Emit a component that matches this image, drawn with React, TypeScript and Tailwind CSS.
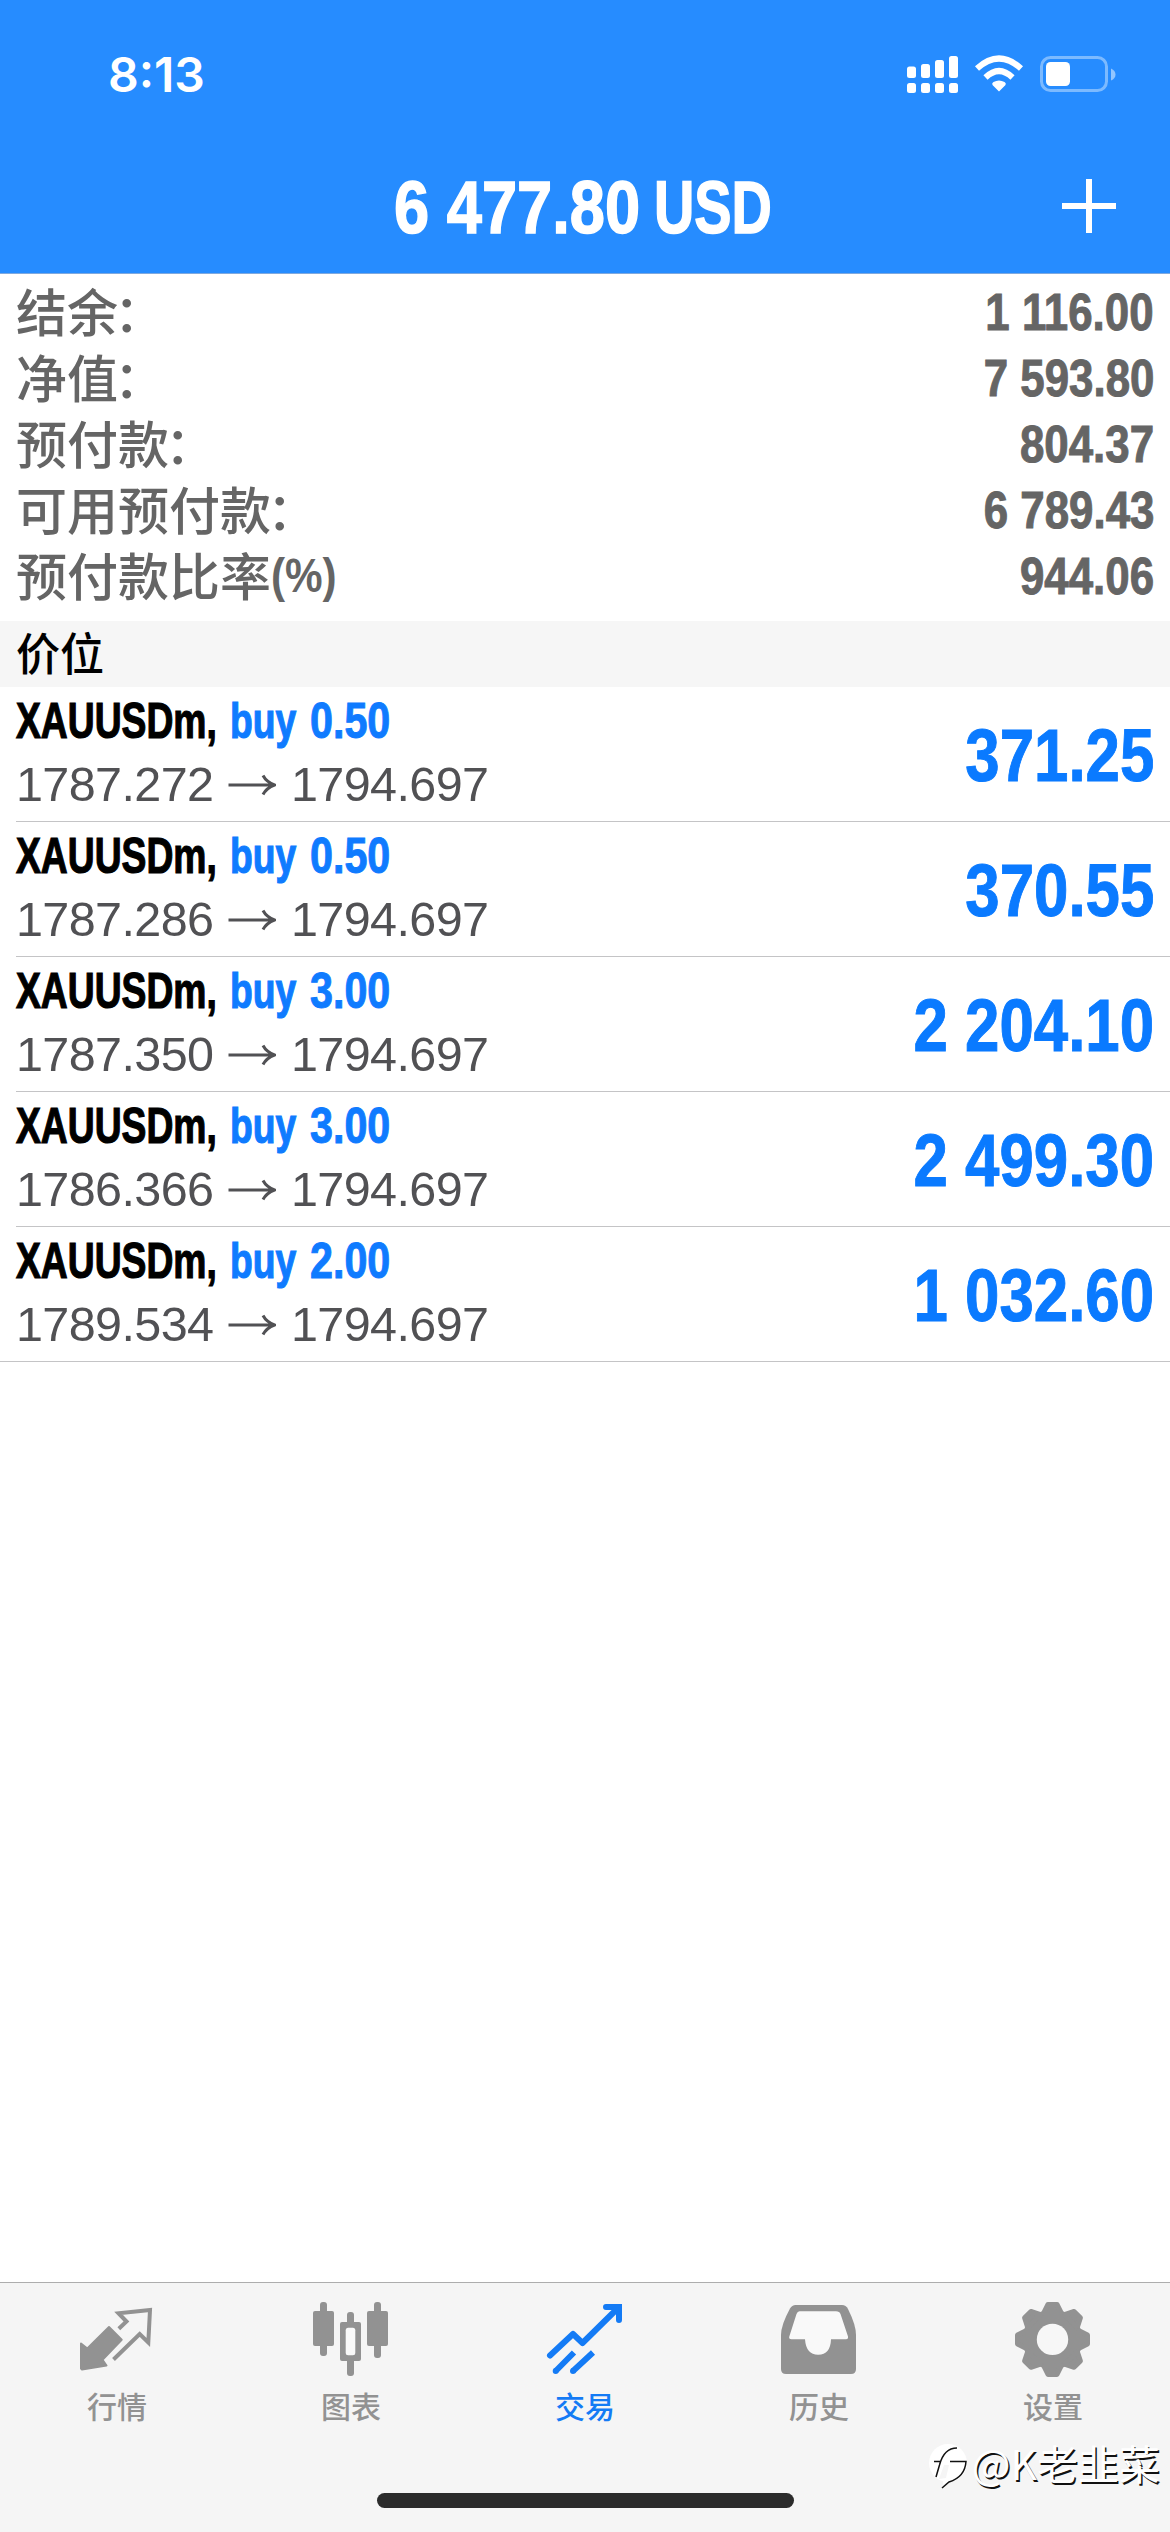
import type { ReactNode } from "react";

const account = [
  { label: "结余", suffix: "：", value: "1 116.00" },
  { label: "净值", suffix: "：", value: "7 593.80" },
  { label: "预付款", suffix: "：", value: "804.37" },
  { label: "可用预付款", suffix: "：", value: "6 789.43" },
  { label: "预付款比率", suffix: "(%)", value: "944.06" },
];

const positions = [
  { symbol: "XAUUSDm,", volume: "0.50", open: "1787.272", current: "1794.697", profit: "371.25" },
  { symbol: "XAUUSDm,", volume: "0.50", open: "1787.286", current: "1794.697", profit: "370.55" },
  { symbol: "XAUUSDm,", volume: "3.00", open: "1787.350", current: "1794.697", profit: "2 204.10" },
  { symbol: "XAUUSDm,", volume: "3.00", open: "1786.366", current: "1794.697", profit: "2 499.30" },
  { symbol: "XAUUSDm,", volume: "2.00", open: "1789.534", current: "1794.697", profit: "1 032.60" },
];

function StatusBar() {
  return (
    <div className="flex h-[141px] items-start justify-between pl-[108px] pr-[54px] pt-[45px]">
      <span className="font-['Inter',sans-serif] text-[48px] font-semibold leading-[60px]">8:13</span>
      <svg className="h-[58px] w-[210px]" viewBox="906 45 210 58" fill="none">
        <g fill="#fff">
          <rect x="907" y="66.5" width="9" height="11.5" rx="2.5" />
          <rect x="921" y="64" width="9" height="14" rx="2.5" />
          <rect x="935" y="60" width="9" height="18" rx="2.5" />
          <rect x="949" y="56" width="9" height="22" rx="2.5" />
          <rect x="907" y="83" width="9" height="10" rx="2.5" />
          <rect x="921" y="83" width="9" height="10" rx="2.5" />
          <rect x="935" y="83" width="9" height="10" rx="2.5" />
          <rect x="949" y="83" width="9" height="10" rx="2.5" />
          <path d="M999 91.5 L992.5 85 Q991.500 83 993.500 82 Q999 79 1004.500 82 Q1006.500 83 1005.500 85 Z" />
        </g>
        <path d="M977 68.500 Q999 48.500 1021 68.500" stroke="#fff" strokeWidth="6" />
        <path d="M985.500 77.500 Q999 64.500 1012.500 77.500" stroke="#fff" strokeWidth="6" />
        <rect x="1041.500" y="57.500" width="65" height="33" rx="9" stroke="#fff" strokeOpacity=".4" strokeWidth="3" />
        <rect x="1046" y="62" width="24" height="24" rx="4.500" fill="#fff" />
        <path d="M1111 68.500 Q1115.500 70.500 1115.500 74.500 Q1115.500 78.500 1111 80.500 Z" fill="#fff" fillOpacity=".5" />
      </svg>
    </div>
  );
}

function Header() {
  return (
    <header className="h-[274px] border-b border-[#7fa9de] bg-[#268cff] text-white">
      <StatusBar />
      <div className="flex h-[132px] items-center justify-between pl-[394px] pr-[54px]">
        <h1 className="flex whitespace-nowrap text-[75px] font-bold leading-[132px] [-webkit-text-stroke:1.5px_#fff]">
          <span className="w-[260px]">
            <span className="inline-block origin-left scale-x-[.843]">6 477.80</span>
          </span>
          <span className="w-[120px]">
            <span className="inline-block origin-left scale-x-[.745]">USD</span>
          </span>
        </h1>
        <svg className="mb-[2px] h-[54px] w-[54px]" viewBox="0 0 54 54">
          <path d="M27 0 V54 M0 27 H54" stroke="#fff" strokeWidth="6" />
        </svg>
      </div>
    </header>
  );
}

function Summary() {
  return (
    <dl className="pb-3 pl-4 pr-4 pt-[5px] text-[#656565]">
      {account.map((row) => (
        <div key={row.label} className="flex h-[66px] items-center justify-between">
          <dt className="flex items-center pb-[5px] font-['Noto_Sans_CJK_SC',sans-serif] text-[51px] font-medium leading-[60px]">
            {row.label}
            {row.suffix === "：" ? (
              <span className="-ml-[4px]">{row.suffix}</span>
            ) : (
              <span className="origin-left scale-x-[.88] pt-[5px] font-['Liberation_Sans',sans-serif] text-[48px] font-bold">
                {row.suffix}
              </span>
            )}
          </dt>
          <dd className="origin-right scale-x-[.843] text-[52px] font-bold leading-[66px] [-webkit-text-stroke:1px_#656565]">
            {row.value}
          </dd>
        </div>
      ))}
    </dl>
  );
}

function PositionRow({ item, last }: { item: (typeof positions)[number]; last: boolean }) {
  return (
    <li className={last ? "border-b border-[#c4c4c6] pl-4" : "pl-4"}>
      <div
        className={
          last
            ? "flex h-[134px] items-center justify-between pr-4"
            : "flex h-[135px] items-center justify-between border-b border-[#c4c4c6] pr-4"
        }
      >
        <div className="h-full">
          <div className="flex h-[66px] whitespace-nowrap text-[50px] font-bold leading-[68px]">
            <span className="w-[214px] text-black">
              <span className="inline-block origin-left scale-x-[.745] [-webkit-text-stroke:1.2px_#000]">{item.symbol}</span>
            </span>
            <span className="w-[80px] text-[#0f7bff]">
              <span className="inline-block origin-left scale-x-[.745] [-webkit-text-stroke:1.2px_#0f7bff]">buy</span>
            </span>
            <span className="inline-block origin-left scale-x-[.825] text-[#0f7bff] [-webkit-text-stroke:1px_#0f7bff]">
              {item.volume}
            </span>
          </div>
          <div className="flex h-[63px] items-center text-[48.500px] leading-[63px] text-[#515154]">
            <span className="w-[212px] tracking-[-0.600px]">{item.open}</span>
            <svg className="mr-[15px] h-6 w-[48px]" viewBox="0 0 48 24" fill="none" stroke="currentColor" strokeWidth="3">
              <path d="M0.500 12 H46 M35 2.500 Q38.500 9 46.500 12 Q38.500 15 35 21.500" />
            </svg>
            <span className="tracking-[-0.600px]">{item.current}</span>
          </div>
        </div>
        <span className="origin-right scale-x-[.835] pt-[3px] text-[74px] font-bold leading-[100px] text-[#0a7aff] [-webkit-text-stroke:1px_#0a7aff]">
          {item.profit}
        </span>
      </div>
    </li>
  );
}

function Tab({ label, active, children }: { label: string; active?: boolean; children: ReactNode }) {
  return (
    <button
      className={
        active
          ? "flex w-[234px] flex-col items-center pt-[17px] text-[#147bf5]"
          : "flex w-[234px] flex-col items-center pt-[17px] text-[#929292]"
      }
    >
      <svg className="h-[78px] w-[78px]" viewBox="0 0 78 78" fill="none">
        {children}
      </svg>
      <span className="mt-[7px] font-['Noto_Sans_CJK_SC',sans-serif] text-[30px] font-medium leading-[40px]">{label}</span>
    </button>
  );
}

function TabBar() {
  return (
    <nav className="flex h-[250px] flex-col items-center justify-between border-t border-[#adadad] bg-[#f5f5f5] pb-6">
      <div className="flex">
        <Tab label="行情">
          <path
            d="M3 43.500 L9.300 48.500 L31 27 L43.700 39.700 L24.500 59.700 L28.500 65.500 L4 69.500 L3 68.500 Z"
            fill="currentColor"
            stroke="currentColor"
            strokeWidth="2"
            strokeLinejoin="round"
          />
          <path
            d="M40.800 28.800 L48.500 21.500 L40.500 13.200 L72 10 L70.300 42.500 L61.700 34 L35.500 59.500"
            stroke="currentColor"
            strokeWidth="4"
          />
        </Tab>
        <Tab label="图表">
          <g fill="currentColor">
            <rect x="1" y="11" width="21" height="35" rx="2" />
            <rect x="8" y="2" width="7" height="54" rx="3" />
            <rect x="55" y="11" width="21" height="35" rx="2" />
            <rect x="62" y="2" width="7" height="56" rx="3" />
            <rect x="28" y="22" width="21" height="39" rx="2" />
            <rect x="35" y="12" width="7" height="64" rx="3" />
          </g>
          <rect x="33.700" y="27.700" width="9.600" height="27.600" rx="2.500" fill="#f9f9f9" />
        </Tab>
        <Tab label="交易" active>
          <g stroke="currentColor" strokeWidth="6" strokeLinejoin="round">
            <path d="M4 55.500 L27 34 L36.500 43 L72 8" strokeLinecap="round" />
            <path d="M60 7 H73 V20" strokeLinecap="round" strokeLinejoin="miter" />
            <path d="M9.700 71 L28 52.500 M27 71 L47 52.500" />
          </g>
          <circle cx="9.700" cy="71" r="3" fill="currentColor" />
          <circle cx="27" cy="71" r="3" fill="currentColor" />
        </Tab>
        <Tab label="历史">
          <path
            d="M15.500 5 H62 Q66 5 68 9 Q76 25 76 35 V69 Q76 74 71 74 H6 Q1 74 1 69 V35 Q1 25 10 8.500 Q12 5 15.500 5 Z"
            fill="currentColor"
          />
          <path
            d="M19.500 11.300 H56 Q59.500 11.300 60.500 14 L68 36.500 Q68.500 39.300 66 39.300 H51 Q50.500 54.700 38.200 54.700 Q26 54.700 25 39.300 H11.500 Q8.500 39.300 9.300 36.500 L16.500 14 Q17.500 11.300 19.500 11.300 Z"
            fill="#f9f9f9"
          />
        </Tab>
        <Tab label="设置">
          <g transform="translate(38.500 39.400)" fill="currentColor" stroke="currentColor" strokeLinejoin="round">
            <circle r="30" stroke="none" />
            {[0, 45, 90, 135, 180, 225, 270, 315].map((angle) => (
              <path key={angle} transform={`rotate(${angle})`} d="M-4.500 -35 H4.500 L9 -26 H-9 Z" strokeWidth="5" />
            ))}
            <circle r="15.700" fill="#f7f7f7" stroke="none" />
          </g>
        </Tab>
      </div>
      <div className="h-[15px] w-[417px] rounded-full bg-[#2b2b2b]" />
    </nav>
  );
}

function Watermark() {
  return (
    <div className="absolute bottom-[43px] right-[10px] flex items-center gap-[4px] text-white">
      <svg className="mt-2 h-[46px] w-[40px]" viewBox="0 0 40 46" fill="none">
        <circle cx="20" cy="20" r="19" fill="#fff" />
        <path d="M14 45 L18 26 L38 20 Q36 34 22 38 Z" fill="#fff" />
        <path d="M8 34 L11.500 22 Q16 5 29 5 M6 18.500 H12 M22 18.500 H38 Q37 34 21 39 L14 45" stroke="#111" strokeWidth="1.500" />
        <path d="M11 36 L16 22 H21 L18 35 Z" fill="#f5f5f5" />
      </svg>
      <span className="whitespace-nowrap font-['Noto_Sans_CJK_SC',sans-serif] text-[41px] font-normal leading-[50px] [text-shadow:1.5px_1.5px_0_#111]">
        @K老韭菜
      </span>
    </div>
  );
}

export default function App() {
  return (
    <div className="relative flex h-[2532px] w-[1170px] flex-col overflow-hidden bg-white font-['Liberation_Sans',Arial,sans-serif]">
      <Header />
      <Summary />
      <h2 className="h-[66px] bg-[#f6f6f6] pl-4 font-['Noto_Sans_CJK_SC',sans-serif] text-[45px] font-medium leading-[62px] text-black">
        <span className="inline-block origin-left scale-x-[.98]">价位</span>
      </h2>
      <ul className="flex-1">
        {positions.map((item, i) => (
          <PositionRow key={item.open} item={item} last={i === positions.length - 1} />
        ))}
      </ul>
      <TabBar />
      <Watermark />
    </div>
  );
}
